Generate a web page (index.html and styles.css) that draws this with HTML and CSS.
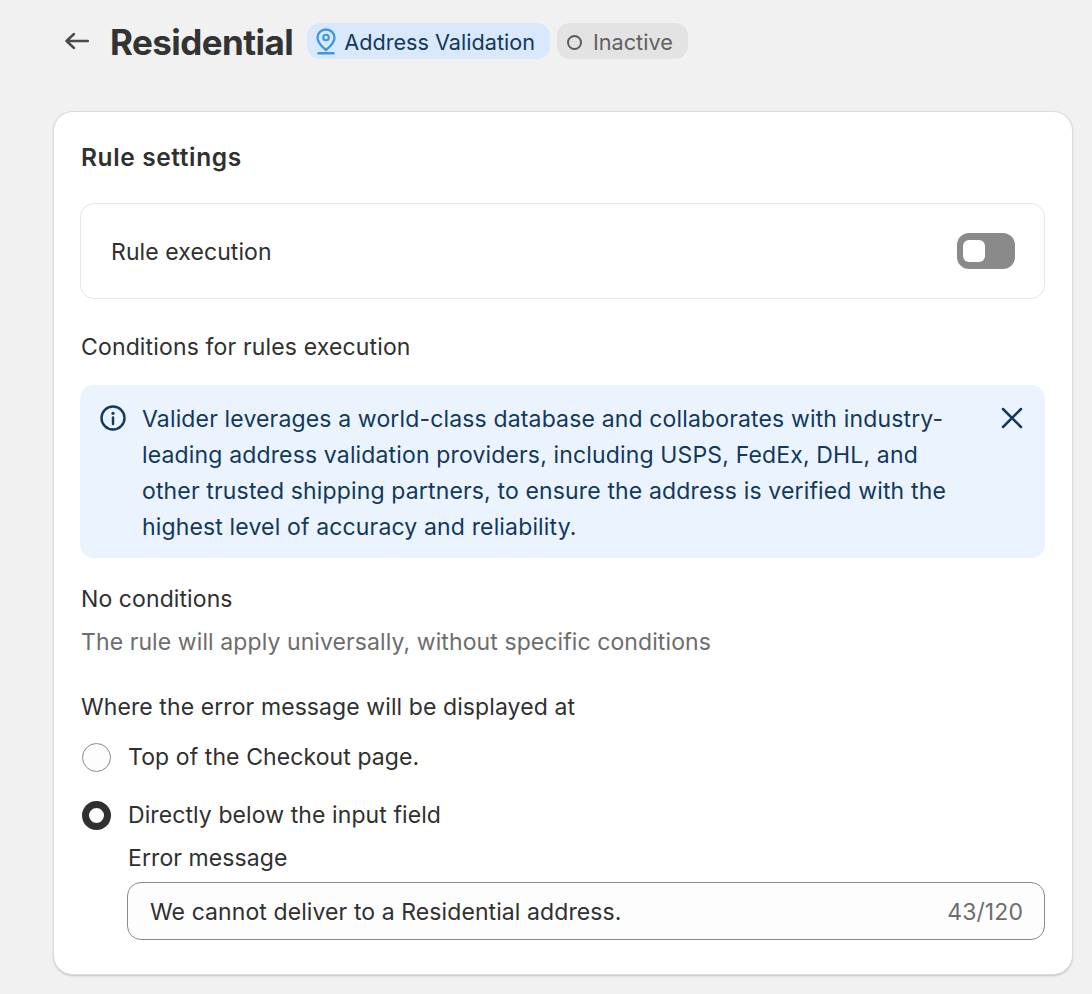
FILE: index.html
```html
<!DOCTYPE html>
<html lang="en">
<head>
<meta charset="utf-8">
<title>Residential</title>
<link rel="stylesheet" href="styles.css">
</head>
<body>
<header class="head">
  <svg class="back" width="26" height="20" viewBox="0 0 26 20"><path d="M11 3 3.500 10 11 17M4 10h21" fill="none" stroke="#4a4a4a" stroke-width="2.400" stroke-linecap="round" stroke-linejoin="round"/></svg>
  <h1 class="title">Residential</h1>
  <span class="badge badge-blue">
    <svg width="22" height="28" viewBox="0 0 22 28"><path d="M11 2.500c-4.900 0-8.500 3.600-8.500 8.200 0 4.400 4 8.600 8.500 12.300 4.500-3.700 8.500-7.900 8.500-12.300 0-4.600-3.600-8.200-8.500-8.200Z" fill="none" stroke="#3f97dc" stroke-width="2.300"/><circle cx="11" cy="10.500" r="2.800" fill="none" stroke="#3f97dc" stroke-width="2.100"/><path d="M3.500 26.300h15" stroke="#3f97dc" stroke-width="2.400" stroke-linecap="round"/></svg>
    <span>Address Validation</span>
  </span>
  <span class="badge badge-gray"><span class="dot"></span><span>Inactive</span></span>
</header>
<main class="card">
  <h2 class="card-title">Rule settings</h2>
  <div class="exec">
    <span class="exec-label">Rule execution</span>
    <span class="toggle"><span class="knob"></span></span>
  </div>
  <p class="cond">Conditions for rules execution</p>
  <div class="banner">
    <svg class="info" width="26" height="26" viewBox="0 0 26 26"><circle cx="13" cy="13" r="11.500" fill="none" stroke="#103a5e" stroke-width="2.400"/><circle cx="13" cy="8.300" r="1.600" fill="#103a5e"/><path d="M13 12.500v6.500" stroke="#103a5e" stroke-width="2.400" stroke-linecap="round"/></svg>
    <p class="banner-text">Valider leverages a world-class database and collaborates with industry-leading address validation providers, including USPS, FedEx, DHL, and other trusted shipping partners, to ensure the address is verified with the highest level of accuracy and reliability.</p>
    <svg class="close" width="22" height="22" viewBox="0 0 22 22"><path d="M2 2l18 18M20 2 2 20" stroke="#103a5e" stroke-width="2.500" stroke-linecap="round"/></svg>
  </div>
  <p class="none">No conditions</p>
  <p class="muted">The rule will apply universally, without specific conditions</p>
  <p class="where">Where the error message will be displayed at</p>
  <div class="radio radio-first"><span class="circle"></span>Top of the Checkout page.</div>
  <div class="radio radio-second"><span class="circle circle-on"></span>Directly below the input field</div>
  <div class="field">
    <div class="field-label">Error message</div>
    <div class="input"><span>We cannot deliver to a Residential address.</span><span class="count">43/120</span></div>
  </div>
</main>
</body>
</html>
```
FILE: styles.css
```css
* { box-sizing: border-box; }
html, body { margin: 0; height: 994px; overflow: hidden; }
body { background: #f1f1f1; color: #303030; font-family: Inter, "Liberation Sans", sans-serif; font-size: 23px; line-height: 36px; letter-spacing: .09px; }
p, h1, h2 { margin: 0; }
.head { display: flex; align-items: center; height: 36px; margin: 23px 0 0 63px; }
.back { margin-right: 20px; }
.title { font-size: 35px; font-weight: 700; letter-spacing: -0.55px; margin: 2px 14px 0 1px; line-height: 36px; color: #333; }
.badge { display: inline-flex; align-items: center; height: 36px; padding-top: 2px; border-radius: 13px; font-size: 21.650px; letter-spacing: 0; }
.badge-blue { background: #d9e9fb; color: #12395c; padding-left: 8px; padding-right: 15px; gap: 7px; margin-right: 7px; }
.badge-blue svg { margin-top: -2px; }
.badge-gray { background: #e3e3e3; color: #616161; padding-left: 10px; padding-right: 15px; gap: 11px; }
.dot { width: 15px; height: 15px; border: 2.600px solid #5c5c5c; border-radius: 50%; }
.card { margin: 52px 19px 0 53px; height: 864px; background: #fff; border: 1px solid #dcdcdc; border-radius: 20px; box-shadow: 0 1px 2px rgba(0,0,0,.18); padding: 27px 27px 0 26px; }
.card-title { font-size: 24.500px; font-weight: 600; letter-spacing: .62px; line-height: 36px; }
.card-title, .cond, .none, .muted, .where, .field-label { padding-left: 1px; }
.exec { display: flex; align-items: center; justify-content: space-between; height: 96px; margin-top: 28px; padding: 0 29px 0 30px; border: 1px solid #e6e6e6; border-radius: 14px; }
.exec-label { margin-top: 2px; }
.toggle { display: flex; align-items: center; width: 58px; height: 36px; padding-left: 6px; background: #8a8a8a; border-radius: 12px; }
.knob { width: 22px; height: 22px; background: #fff; border-radius: 6px; }
.cond { margin-top: 30px; letter-spacing: .15px; }
.banner { display: flex; align-items: flex-start; margin-top: 20px; height: 173px; padding: 16px 22px 0 20px; background: #eaf3fe; border-radius: 14px; color: #12395c; letter-spacing: .15px; }
.info { margin: 4px 16px 0 0; flex: none; }
.banner-text { flex: 1; }
.close { margin: 6px 0 0 40px; flex: none; }
.none { margin-top: 23px; }
.muted { margin-top: 7px; color: #6d6d6d; }
.where { margin-top: 29px; }
.radio { display: flex; align-items: center; gap: 17px; padding-left: 2px; }
.radio-first { margin-top: 14px; }
.radio-second { margin-top: 22px; }
.circle { width: 29px; height: 29px; border: 1px solid #8a8a8a; border-radius: 50%; background: #fdfdfd; }
.circle-on { border: 7px solid #303030; background: #fff; }
.field { margin: 7px 0 0 47px; }
.input { display: flex; justify-content: space-between; align-items: center; height: 58px; margin-top: 6px; padding: 2px 21px 0 22px; border: 1px solid #8a8a8a; border-radius: 14px; background: #fdfdfd; }
.count { color: #6d6d6d; }
```
